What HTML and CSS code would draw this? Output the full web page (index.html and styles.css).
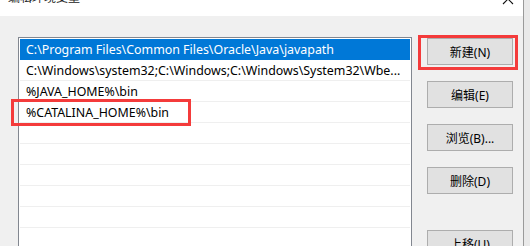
FILE: index.html
```html
<!DOCTYPE html>
<html lang="zh">
<head>
<meta charset="UTF-8">
<meta name="viewport" content="width=device-width, initial-scale=1.0">
<title>编辑环境变量</title>
<link rel="stylesheet" href="styles.css">
</head>
<body>

<div class="window">
    <div class="title-bar">
        <span class="title">编辑环境变量</span>
        <svg class="close" width="12" height="12" viewBox="0 0 12 12">
            <path d="M1 1 L11 11 M11 1 L1 11" stroke="#111" stroke-width="1.1" fill="none"/>
        </svg>
    </div>

    <div class="content">
        <div class="path-list">
            <div class="row selected">C:\Program Files\Common Files\Oracle\Java\javapath</div>
            <div class="row">C:\Windows\system32;C:\Windows;C:\Windows\System32\Wbe...</div>
            <div class="row">%JAVA_HOME%\bin</div>
            <div class="row marked">%CATALINA_HOME%\bin<span class="mark mark-row"></span></div>
            <div class="row"></div>
            <div class="row"></div>
            <div class="row"></div>
            <div class="row"></div>
            <div class="row"></div>
            <div class="row"></div>
        </div>

        <div class="buttons">
            <button class="marked">新建(N)<span class="mark mark-btn"></span></button>
            <button>编辑(E)</button>
            <button>浏览(B)...</button>
            <button>删除(D)</button>
            <button class="move">上移(U)</button>
        </div>
    </div>
</div>

</body>
</html>
```

FILE: styles.css
```css
body {
  margin: 0;
  background-color: #e9e9e9;
  font-family: "Noto Sans", "Noto Sans CJK SC", sans-serif;
  font-size: 12px;
  color: #000;
  overflow: hidden;
}
.window {
  width: 523px;
  height: 246px;
  background: #f0f0f0;
  border-right: 1px solid #9a9a9a;
  overflow: hidden;
}
.title-bar {
  height: 16px;
  background: #fff;
  display: flex;
  justify-content: space-between;
  overflow: hidden;
}
.title {
  margin-left: 8px;
  margin-top: -9px;
  line-height: 14px;
  color: #222;
}
.close {
  margin-top: -7px;
  margin-right: 9px;
}
.content {
  display: flex;
  padding: 21px 0 0 18px;
}
.path-list {
  width: 390px;
  height: 240px;
  background: #fff;
  border: 1px solid #828790;
  padding: 1px;
  box-sizing: content-box;
}
.row {
  height: 20px;
  line-height: 21px;
  font-size: 12.4px;
  border-bottom: 1px solid #efefef;
  padding-left: 6px;
  white-space: nowrap;
  overflow: hidden;
}
.row.selected {
  background: #0078d7;
  border-bottom-color: #0078d7;
  color: #fff;
}
.marked {
  position: relative;
  overflow: visible;
}
.mark {
  position: absolute;
  border: 3px solid #f43b3b;
  box-sizing: border-box;
  pointer-events: none;
}
.mark-row {
  left: -9px;
  top: -3px;
  width: 180px;
  height: 27px;
}
.buttons {
  display: flex;
  flex-direction: column;
  gap: 16px;
  margin-left: 15px;
  padding-top: 1px;
}
button {
  width: 86px;
  height: 27px;
  padding: 0;
  font-family: inherit;
  font-size: 12px;
  color: #000;
  background: #e1e1e1;
  border: 1px solid #adadad;
}
button.move {
  margin-top: 20px;
}
.mark-btn {
  left: -10px;
  top: -4px;
  width: 100px;
  height: 35px;
}
```
